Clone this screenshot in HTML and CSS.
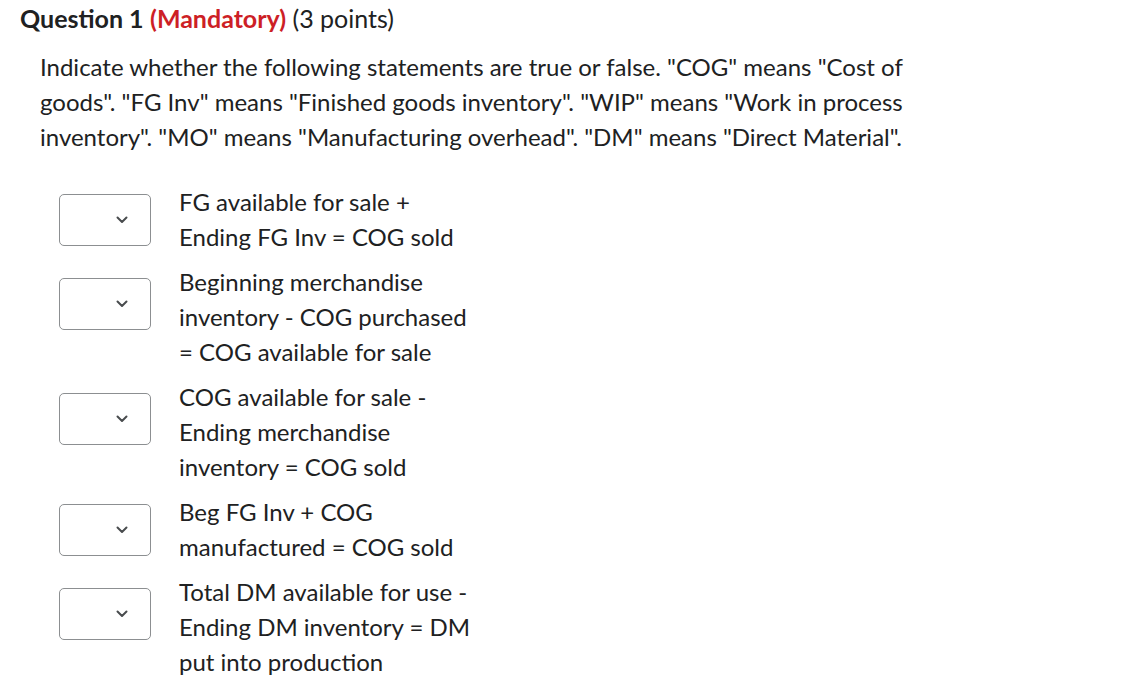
FILE: index.html
```html
<!DOCTYPE html>
<html>
<head>
<meta charset="utf-8">
<link rel="stylesheet" href="styles.css">
</head>
<body>
<div class="question">
  <h2 class="q-title"><span class="q-num">Question 1</span> <span class="q-mand">(Mandatory)</span> <span class="q-pts">(3 points)</span></h2>
  <div class="q-body">
    <p class="q-text">Indicate whether the following statements are true or false. "COG" means "Cost of goods". "FG Inv" means "Finished goods inventory". "WIP" means "Work in process inventory". "MO" means "Manufacturing overhead". "DM" means "Direct Material".</p>
    <ul class="items">
      <li class="item">
        <div class="select"><svg class="chev" width="12" height="8" viewBox="0 0 12 8"><path d="M1.5 1.5 L6 6 L10.5 1.5" fill="none" stroke="#494c4e" stroke-width="2" stroke-linecap="round" stroke-linejoin="round"/></svg></div>
        <div class="stmt">FG available for sale +<br>Ending FG Inv = COG sold</div>
      </li>
      <li class="item item-tall">
        <div class="select"><svg class="chev" width="12" height="8" viewBox="0 0 12 8"><path d="M1.5 1.5 L6 6 L10.5 1.5" fill="none" stroke="#494c4e" stroke-width="2" stroke-linecap="round" stroke-linejoin="round"/></svg></div>
        <div class="stmt">Beginning merchandise<br>inventory - COG purchased<br>= COG available for sale</div>
      </li>
      <li class="item item-tall">
        <div class="select"><svg class="chev" width="12" height="8" viewBox="0 0 12 8"><path d="M1.5 1.5 L6 6 L10.5 1.5" fill="none" stroke="#494c4e" stroke-width="2" stroke-linecap="round" stroke-linejoin="round"/></svg></div>
        <div class="stmt">COG available for sale -<br>Ending merchandise<br>inventory = COG sold</div>
      </li>
      <li class="item">
        <div class="select"><svg class="chev" width="12" height="8" viewBox="0 0 12 8"><path d="M1.5 1.5 L6 6 L10.5 1.5" fill="none" stroke="#494c4e" stroke-width="2" stroke-linecap="round" stroke-linejoin="round"/></svg></div>
        <div class="stmt">Beg FG Inv + COG<br>manufactured = COG sold</div>
      </li>
      <li class="item item-tall">
        <div class="select"><svg class="chev" width="12" height="8" viewBox="0 0 12 8"><path d="M1.5 1.5 L6 6 L10.5 1.5" fill="none" stroke="#494c4e" stroke-width="2" stroke-linecap="round" stroke-linejoin="round"/></svg></div>
        <div class="stmt">Total DM available for use -<br>Ending DM inventory = DM<br>put into production</div>
      </li>
    </ul>
  </div>
</div>
</body>
</html>
```
FILE: styles.css
```css
html, body {
  margin: 0;
  padding: 0;
  background: #ffffff;
}
body {
  font-family: Lato, "Liberation Sans", sans-serif;
  color: #202122;
}
.question {
  padding: 4px 0 0 20px;
}
.q-title {
  margin: 0;
  font-size: 25px;
  line-height: 28px;
  font-weight: 400;
}
.q-num {
  font-weight: 700;
}
.q-mand {
  color: #cd1f26;
  font-weight: 700;
}
.q-body {
  padding-left: 20px;
}
.q-text {
  margin: 17px 0 0 0;
  width: 900px;
  font-size: 24px;
  line-height: 35px;
}
.items {
  list-style: none;
  margin: 30px 0 0 0;
  padding: 0 0 0 19px;
  display: flex;
  flex-direction: column;
  gap: 10px;
}
.item {
  display: flex;
  align-items: flex-start;
}
.select {
  flex: none;
  box-sizing: border-box;
  width: 92px;
  height: 52px;
  margin-top: 10px;
  border: 1px solid #8c8f91;
  border-radius: 5px;
  background: #ffffff;
  display: flex;
  align-items: center;
  justify-content: flex-end;
  padding-right: 22px;
}
.item-tall .select {
  margin-top: 14px;
}
.chev {
  display: block;
}
.stmt {
  margin-left: 28px;
  font-size: 24px;
  line-height: 35px;
}
```
